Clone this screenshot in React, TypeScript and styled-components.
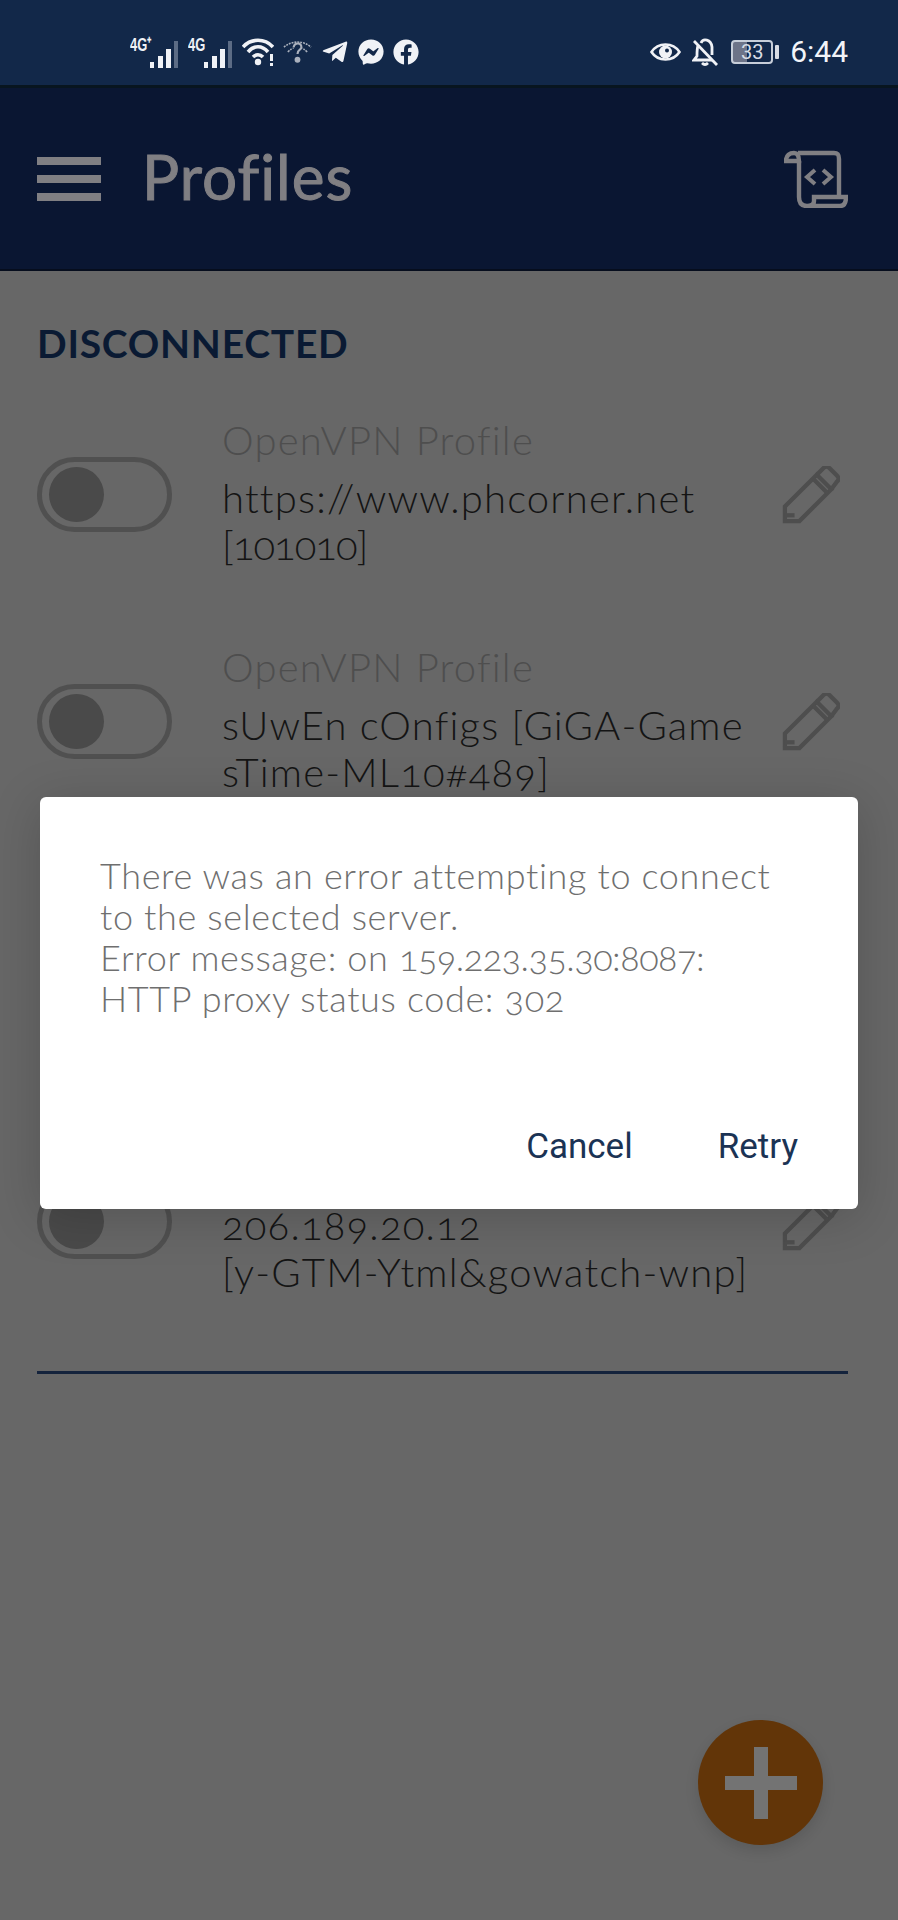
import React from 'react';
import styled, { createGlobalStyle } from 'styled-components';
import { FaFacebook, FaFacebookMessenger, FaTelegramPlane } from 'react-icons/fa';

const GlobalStyle = createGlobalStyle`
html, body {
    margin: 0;
    padding: 0;
    background: #676767;
}
* {
    box-sizing: border-box;
}
`

const Screen = styled.div`
position: relative;
width: 898px;
height: 1920px;
overflow: hidden;
background: #676767;
font-family: Lato, "Open Sans", sans-serif;
`

const StatusBar = styled.div`
height: 85px;
display: flex;
align-items: center;
padding: 18px 50px 0 130px;
background: #122849;
color: #f0f2f6;
`

const StatusLeft = styled.div`
display: flex;
align-items: center;
gap: 9px;
flex: 1;
`

const StatusRight = styled.div`
display: flex;
align-items: center;
gap: 11px;
`

const Network = styled.div`
display: flex;
align-items: flex-start;
height: 34px;
`

const NetworkLabel = styled.span<{ $width: number }>`
width: ${props => props.$width}px;
font-family: "Liberation Sans", sans-serif;
font-weight: 700;
font-size: 19px;
line-height: 20px;
white-space: nowrap;
transform: scaleX(0.68);
transform-origin: left;
`

const Battery = styled.div`
display: flex;
align-items: center;
gap: 2px;
margin-left: 2px;
`

const BatteryBody = styled.div`
width: 42px;
height: 24px;
border: 2px solid #c7ced9;
border-radius: 4px;
background: linear-gradient(90deg, #6d7488 0 36%, transparent 36%);
color: #d8dce4;
font-family: Roboto, sans-serif;
font-size: 20px;
line-height: 20px;
text-align: center;
`

const BatteryNub = styled.div`
width: 4px;
height: 14px;
background: #d8dce4;
border-radius: 1px;
`

const Clock = styled.span`
font-family: Roboto, sans-serif;
font-size: 30px;
color: #f2f4f8;
`

const Header = styled.header`
height: 186px;
display: flex;
align-items: center;
padding: 0 50px 0 37px;
background: #0a1632;
border-top: 3px solid #08151f;
border-bottom: 2px solid #060d1d;
`

const Hamburger = styled.div`
width: 64px;
display: flex;
flex-direction: column;
gap: 10px;
margin-right: 41px;
`

const HamburgerBar = styled.span`
height: 8px;
background: #807f83;
`

const Title = styled.h1`
flex: 1;
margin: 0 0 5px;
font-size: 62px;
font-weight: 400;
letter-spacing: 1px;
line-height: 72px;
color: #807f83;
-webkit-text-stroke: 1px #807f83;
`

const Section = styled.section<{ $top: number }>`
margin-top: ${props => props.$top}px;
padding: 0 37px;
`

const SectionTitle = styled.h2`
margin: 0 0 15px;
height: 45px;
font-size: 39px;
font-weight: 700;
letter-spacing: 0.75px;
line-height: 45px;
color: #0a1a33;
`

const Row = styled.div`
display: flex;
height: 227px;
align-items: center;
`

const Toggle = styled.div`
width: 135px;
height: 75px;
flex-shrink: 0;
display: flex;
align-items: center;
padding-left: 7px;
border: 5px solid #505050;
border-radius: 38px;
`

const ToggleKnob = styled.div`
width: 55px;
height: 55px;
border-radius: 50%;
background: #4a4a4a;
`

const RowText = styled.div`
flex: 1;
margin: -3px 0 0 50px;
`

const RowLabel = styled.div`
font-size: 40px;
font-weight: 300;
letter-spacing: 1.2px;
line-height: 46px;
margin-bottom: 12px;
color: #4e4e4e;
`

const RowName = styled.div<{ $tight?: boolean }>`
font-size: 40px;
font-weight: 300;
letter-spacing: ${props => (props.$tight ? '-1px' : '1.2px')};
line-height: 47px;
color: #141414;
white-space: nowrap;
font-feature-settings: "onum";
`

const EditButton = styled.div`
width: 58px;
height: 58px;
margin-right: 21px;
flex-shrink: 0;
color: #4e4e4e;
`

const Divider = styled.hr`
margin: 36px 13px 0 0;
border: none;
height: 3px;
background: #14233c;
`

const Dialog = styled.div`
position: absolute;
top: 797px;
left: 40px;
width: 818px;
height: 412px;
padding: 58px 60px 0;
display: flex;
flex-direction: column;
background: #fff;
border-radius: 6px;
box-shadow: 0 8px 50px rgba(0, 0, 0, 0.18);
`

const DialogText = styled.p`
margin: 0;
font-size: 36px;
font-weight: 300;
letter-spacing: 0.65px;
line-height: 41px;
color: #6f6f6f;
font-feature-settings: "onum";
`

const Address = styled.span`
letter-spacing: -0.5px;
`

const DialogActions = styled.div`
margin-top: auto;
height: 82px;
display: flex;
justify-content: flex-end;
align-items: flex-start;
gap: 85px;
`

const DialogButton = styled.span`
font-family: Roboto, sans-serif;
font-size: 35px;
line-height: 40px;
color: #1b3354;
`

const Fab = styled.div`
position: absolute;
left: 698px;
top: 1720px;
width: 125px;
height: 125px;
display: flex;
align-items: center;
justify-content: center;
border-radius: 50%;
background: #623508;
box-shadow: 0 6px 14px rgba(0, 0, 0, 0.12);
`

function Bars(): JSX.Element {
    return (
        <svg width="29" height="28" viewBox="0 0 29 28" style={{ marginTop: 6 }}>
            <rect x="0" y="21" width="4" height="6" fill="currentColor" />
            <rect x="8" y="15" width="5" height="12" fill="currentColor" />
            <rect x="16" y="8" width="5" height="19" fill="currentColor" />
            <rect x="24" y="0" width="4" height="27" fill="#5c6c85" />
        </svg>
    )
}

function Wifi(): JSX.Element {
    return (
        <svg width="32" height="28" viewBox="0 0 32 28" fill="none" stroke="currentColor" strokeWidth="3.6">
            <path d="M1 9C9 0 23 0 31 9" />
            <path d="M6 14C12 7 20 7 26 14" />
            <path d="M11 19C14 16 18 16 21 19" />
            <circle cx="16" cy="24" r="3.2" fill="currentColor" stroke="none" />
            <rect x="28" y="16" width="3" height="7" fill="currentColor" stroke="none" />
            <rect x="28" y="25" width="3" height="3" fill="currentColor" stroke="none" />
        </svg>
    )
}

function WifiQuestion(): JSX.Element {
    return (
        <svg width="29" height="26" viewBox="0 0 30 26" fill="none" stroke="#aab1bd" strokeWidth="1.6" strokeDasharray="2 1">
            <path d="M1 8C9 1 21 1 29 8" />
            <path d="M5 13C8 10 10 9 11 9" />
            <path d="M25 13C22 10 20 9 19 9" />
            <path d="M11 8C12 3 19 3 19 8C19 11 15 10 15 15" strokeDasharray="none" strokeWidth="2.2" />
            <circle cx="15" cy="21" r="3" fill="#aab1bd" stroke="none" />
        </svg>
    )
}

function Eye(): JSX.Element {
    return (
        <svg width="31" height="24" viewBox="0 0 31 24" fill="none" stroke="currentColor" strokeWidth="2.6">
            <path d="M1.5 12C8 2 23 2 29.5 12C23 22 8 22 1.5 12Z" />
            <circle cx="15.5" cy="12" r="6.5" fill="currentColor" stroke="none" />
            <circle cx="17" cy="10.5" r="2" fill="#122849" stroke="none" />
        </svg>
    )
}

function BellOff(): JSX.Element {
    return (
        <svg width="26" height="28" viewBox="0 0 26 28" fill="none" stroke="currentColor" strokeWidth="2.8">
            <path d="M6 8C5 10 5 12 5 18L2 22H20" />
            <path d="M9 5C11 0 19 1 20 9V17" />
            <path d="M10 25C12 27 14 27 16 25" />
            <path d="M2 3L25 27" />
        </svg>
    )
}

function ScriptIcon(): JSX.Element {
    return (
        <svg width="64" height="58" viewBox="0 0 64 58" fill="none" stroke="#807f83" strokeWidth="4.4">
            <path d="M14 3H50C54 3 55 5 55 9V47" />
            <path d="M2 11C2 5 6 3 10 3C14 3 15 6 15 11Z" />
            <path d="M15 11V47C15 53 18 56 23 56H56C60 56 62 53 62 47H30V51C30 54 28 56 23 56" />
            <path d="M31 20L23 27L31 34M39 20L47 27L39 34" strokeWidth="4" />
        </svg>
    )
}

function Pencil(): JSX.Element {
    return (
        <svg width="58" height="58" viewBox="0 0 60 60" fill="none" stroke="currentColor" strokeWidth="4.4">
            <path d="M3 42L36 9L51 24L18 57H3Z" />
            <path d="M36 9L43 2C45 0 47 0 49 2L57 10C59 12 59 14 57 16L51 24" />
            <path d="M32 13L47 28" />
            <path d="M3 51H13" />
        </svg>
    )
}

function Plus(): JSX.Element {
    return (
        <svg width="72" height="72" viewBox="0 0 72 72">
            <path d="M29 0H43V29H72V43H43V72H29V43H0V29H29Z" fill="#737373" />
        </svg>
    )
}

function ProfileRow({ name, detail, tight }: { name: string; detail: string; tight?: boolean }): JSX.Element {
    return (
        <Row>
            <Toggle>
                <ToggleKnob />
            </Toggle>
            <RowText>
                <RowLabel>OpenVPN Profile</RowLabel>
                <RowName>{name}</RowName>
                <RowName $tight={tight}>{detail}</RowName>
            </RowText>
            <EditButton>
                <Pencil />
            </EditButton>
        </Row>
    )
}

function App(): JSX.Element {
    return (
        <Screen>
            <GlobalStyle />
            <StatusBar>
                <StatusLeft>
                    <Network>
                        <NetworkLabel $width={20}>4G⁺</NetworkLabel>
                        <Bars />
                    </Network>
                    <Network>
                        <NetworkLabel $width={16}>4G</NetworkLabel>
                        <Bars />
                    </Network>
                    <Wifi />
                    <WifiQuestion />
                    <FaTelegramPlane size={28} />
                    <FaFacebookMessenger size={26} />
                    <FaFacebook size={26} />
                </StatusLeft>
                <StatusRight>
                    <Eye />
                    <BellOff />
                    <Battery>
                        <BatteryBody>33</BatteryBody>
                        <BatteryNub />
                    </Battery>
                    <Clock>6:44</Clock>
                </StatusRight>
            </StatusBar>
            <Header>
                <Hamburger>
                    <HamburgerBar />
                    <HamburgerBar />
                    <HamburgerBar />
                </Hamburger>
                <Title>Profiles</Title>
                <ScriptIcon />
            </Header>
            <Section $top={50}>
                <SectionTitle>DISCONNECTED</SectionTitle>
                <ProfileRow name="https://www.phcorner.net" detail="[101010]" tight />
                <ProfileRow name="sUwEn cOnfigs [GiGA-Game" detail="sTime-ML10#489]" />
            </Section>
            <Section $top={273}>
                <ProfileRow name="206.189.20.12" detail="[y-GTM-Ytml&gowatch-wnp]" />
                <Divider />
            </Section>
            <Dialog>
                <DialogText>
                    There was an error attempting to connect
                    <br />
                    to the selected server.
                    <br />
                    Error message: on <Address>159.223.35.30:8087:</Address>
                    <br />
                    HTTP proxy status code: 302
                </DialogText>
                <DialogActions>
                    <DialogButton>Cancel</DialogButton>
                    <DialogButton>Retry</DialogButton>
                </DialogActions>
            </Dialog>
            <Fab>
                <Plus />
            </Fab>
        </Screen>
    )
}

export default App;
